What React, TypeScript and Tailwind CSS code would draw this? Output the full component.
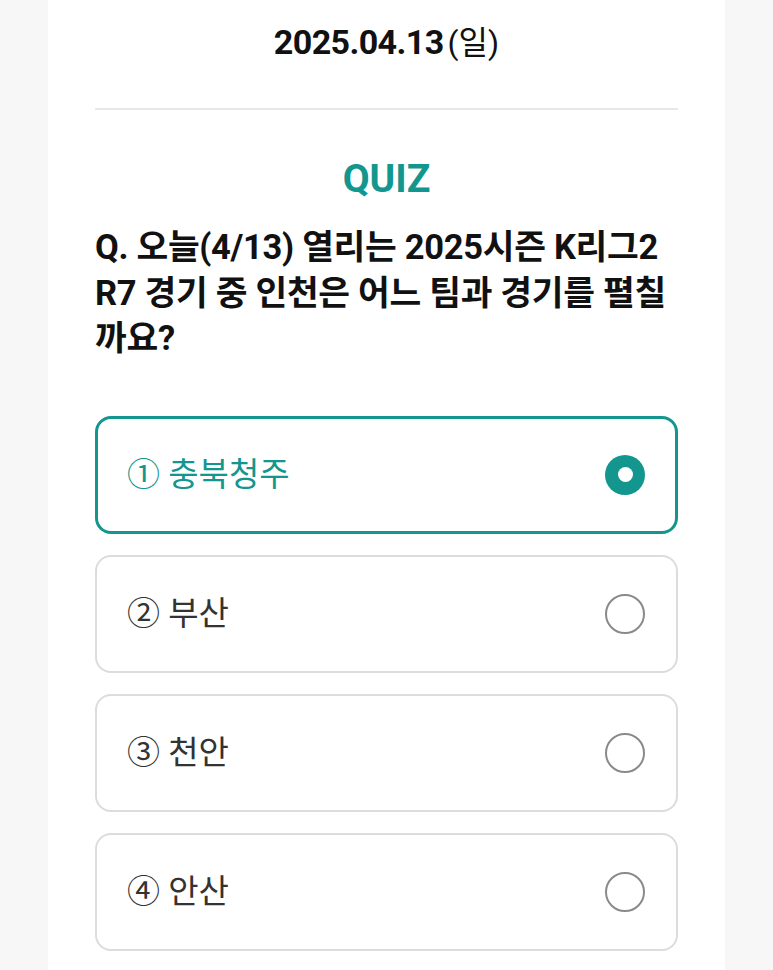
const FONT = "font-['Roboto','Noto_Sans_CJK_KR',sans-serif]";

const options = [
  { id: 1, label: '① 충북청주' },
  { id: 2, label: '② 부산' },
  { id: 3, label: '③ 천안' },
  { id: 4, label: '④ 안산' },
];

function Radio({ checked }: { checked: boolean }) {
  if (checked) {
    return (
      <span className="flex h-[40px] w-[40px] items-center justify-center rounded-full bg-[#13968e]">
        <span className="h-[15px] w-[15px] rounded-full bg-white" />
      </span>
    );
  }
  return <span className="h-[40px] w-[40px] rounded-full border-2 border-[#8a8a8a]" />;
}

export default function App() {
  const selected = 1;

  return (
    <div className={`min-h-screen bg-[#f7f7f7] ${FONT}`}>
      <div className="mx-[48px] min-h-screen bg-white px-[47px]">
        {/* date */}
        <div className="flex h-[108px] items-start justify-center pt-[22px] text-[#111]">
          <div className="flex items-baseline leading-[40px]">
            <span className="text-[34px] font-bold tracking-[-0.6px]">2025.04.13</span>
            <span className="ml-[4px] text-[32px] font-normal">(일)</span>
          </div>
        </div>
        <div className="border-t-2 border-[#e8e8e8]" />

        {/* quiz */}
        <h2 className="mt-[46px] text-center text-[39px] font-bold leading-[46px] text-[#13968e]">QUIZ</h2>
        <p className="mt-[23px] text-[34.5px] font-bold leading-[45.5px] tracking-[-0.3px] text-[#111]">
          Q. 오늘(4/13) 열리는 2025시즌 K리그2 R7 경기 중 인천은 어느 팀과 경기를 펼칠까요?
        </p>

        <div className="mt-[54px] flex flex-col gap-[21px] pb-[20px]">
          {options.map((opt) => {
            const on = opt.id === selected;
            return (
              <div
                key={opt.id}
                className={`flex h-[118px] items-center justify-between rounded-[16px] bg-white ${
                  on ? 'border-[3px] border-[#13968e] pl-[29px] pr-[30px]' : 'border-2 border-[#dcdcdc] pl-[30px] pr-[31px]'
                }`}
              >
                <span className={`text-[33px] leading-none ${on ? 'text-[#13968e]' : 'text-[#333]'}`}>
                  {opt.label}
                </span>
                <Radio checked={on} />
              </div>
            );
          })}
        </div>
      </div>
    </div>
  );
}
